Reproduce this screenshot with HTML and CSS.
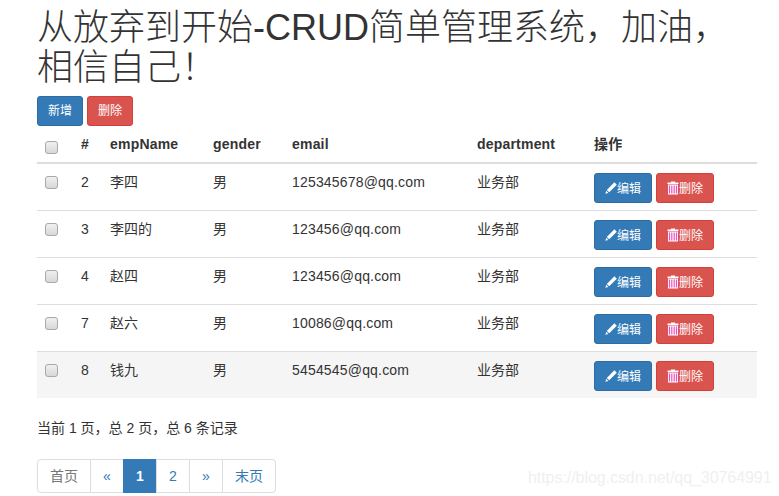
FILE: index.html
```html
<!DOCTYPE html>
<html lang="zh-CN">
<head>
<meta charset="utf-8">
<title>CRUD</title>
<link rel="stylesheet" href="styles.css">
</head>
<body>
<main class="page">
  <h1 class="title">从放弃到开始-CRUD简单管理系统，加油，相信自己！</h1>
  <div class="toolbar">
    <button class="btn btn-primary btn-top">新增</button>
    <button class="btn btn-danger btn-top">删除</button>
  </div>
  <table class="grid">
    <colgroup>
      <col class="c1"><col class="c2"><col class="c3"><col class="c4"><col class="c5"><col class="c6"><col class="c7">
    </colgroup>
    <thead>
      <tr><th><input type="checkbox" class="check"></th><th>#</th><th>empName</th><th>gender</th><th>email</th><th>department</th><th>操作</th></tr>
    </thead>
    <tbody>
      <tr>
        <td><input type="checkbox" class="check"></td><td>2</td><td>李四</td><td>男</td><td class="mail">125345678@qq.com</td><td>业务部</td>
        <td class="actions">
          <button class="btn btn-primary btn-row"><svg class="ico" viewBox="0 0 12 13"><path d="M9.4 .8 11.8 3.2 4.2 10.8 1.8 8.4Z" fill="#fff"/><path d="M1.2 9.2 3.4 11.4 .4 12.2Z" fill="#fff"/></svg>编辑</button>
          <button class="btn btn-danger btn-row"><svg class="ico" viewBox="0 0 12 14"><path d="M4 1.5V.5H8V1.5H11.5V3H.5V1.5Z" fill="#fff"/><path d="M1 3.5H11V13.5H1Z" fill="#fff"/><path d="M2.5 4.5V12.5M4.8 4.5V12.5M7.2 4.5V12.5M9.5 4.5V12.5" stroke="#f04fc0" stroke-width="1.2"/></svg>删除</button>
        </td>
      </tr>
      <tr>
        <td><input type="checkbox" class="check"></td><td>3</td><td>李四的</td><td>男</td><td class="mail">123456@qq.com</td><td>业务部</td>
        <td class="actions">
          <button class="btn btn-primary btn-row"><svg class="ico" viewBox="0 0 12 13"><path d="M9.4 .8 11.8 3.2 4.2 10.8 1.8 8.4Z" fill="#fff"/><path d="M1.2 9.2 3.4 11.4 .4 12.2Z" fill="#fff"/></svg>编辑</button>
          <button class="btn btn-danger btn-row"><svg class="ico" viewBox="0 0 12 14"><path d="M4 1.5V.5H8V1.5H11.5V3H.5V1.5Z" fill="#fff"/><path d="M1 3.5H11V13.5H1Z" fill="#fff"/><path d="M2.5 4.5V12.5M4.8 4.5V12.5M7.2 4.5V12.5M9.5 4.5V12.5" stroke="#f04fc0" stroke-width="1.2"/></svg>删除</button>
        </td>
      </tr>
      <tr>
        <td><input type="checkbox" class="check"></td><td>4</td><td>赵四</td><td>男</td><td class="mail">123456@qq.com</td><td>业务部</td>
        <td class="actions">
          <button class="btn btn-primary btn-row"><svg class="ico" viewBox="0 0 12 13"><path d="M9.4 .8 11.8 3.2 4.2 10.8 1.8 8.4Z" fill="#fff"/><path d="M1.2 9.2 3.4 11.4 .4 12.2Z" fill="#fff"/></svg>编辑</button>
          <button class="btn btn-danger btn-row"><svg class="ico" viewBox="0 0 12 14"><path d="M4 1.5V.5H8V1.5H11.5V3H.5V1.5Z" fill="#fff"/><path d="M1 3.5H11V13.5H1Z" fill="#fff"/><path d="M2.5 4.5V12.5M4.8 4.5V12.5M7.2 4.5V12.5M9.5 4.5V12.5" stroke="#f04fc0" stroke-width="1.2"/></svg>删除</button>
        </td>
      </tr>
      <tr>
        <td><input type="checkbox" class="check"></td><td>7</td><td>赵六</td><td>男</td><td class="mail">10086@qq.com</td><td>业务部</td>
        <td class="actions">
          <button class="btn btn-primary btn-row"><svg class="ico" viewBox="0 0 12 13"><path d="M9.4 .8 11.8 3.2 4.2 10.8 1.8 8.4Z" fill="#fff"/><path d="M1.2 9.2 3.4 11.4 .4 12.2Z" fill="#fff"/></svg>编辑</button>
          <button class="btn btn-danger btn-row"><svg class="ico" viewBox="0 0 12 14"><path d="M4 1.5V.5H8V1.5H11.5V3H.5V1.5Z" fill="#fff"/><path d="M1 3.5H11V13.5H1Z" fill="#fff"/><path d="M2.5 4.5V12.5M4.8 4.5V12.5M7.2 4.5V12.5M9.5 4.5V12.5" stroke="#f04fc0" stroke-width="1.2"/></svg>删除</button>
        </td>
      </tr>
      <tr class="hover">
        <td><input type="checkbox" class="check"></td><td>8</td><td>钱九</td><td>男</td><td class="mail">5454545@qq.com</td><td>业务部</td>
        <td class="actions">
          <button class="btn btn-primary btn-row"><svg class="ico" viewBox="0 0 12 13"><path d="M9.4 .8 11.8 3.2 4.2 10.8 1.8 8.4Z" fill="#fff"/><path d="M1.2 9.2 3.4 11.4 .4 12.2Z" fill="#fff"/></svg>编辑</button>
          <button class="btn btn-danger btn-row"><svg class="ico" viewBox="0 0 12 14"><path d="M4 1.5V.5H8V1.5H11.5V3H.5V1.5Z" fill="#fff"/><path d="M1 3.5H11V13.5H1Z" fill="#fff"/><path d="M2.5 4.5V12.5M4.8 4.5V12.5M7.2 4.5V12.5M9.5 4.5V12.5" stroke="#f04fc0" stroke-width="1.2"/></svg>删除</button>
        </td>
      </tr>
    </tbody>
  </table>
  <p class="summary">当前 1 页，总 2 页，总 6 条记录</p>
  <nav class="pager">
    <a class="page-link muted">首页</a><a class="page-link">«</a><a class="page-link active">1</a><a class="page-link">2</a><a class="page-link">»</a><a class="page-link">末页</a>
  </nav>
</main>
<div class="watermark">https://blog.csdn.net/qq_30764991</div>
</body>
</html>
```
FILE: styles.css
```css
* { box-sizing: border-box; }
html, body { height: 100%; }
body {
  margin: 0;
  overflow: hidden;
  background: #fff;
  color: #333;
  font-family: "Liberation Sans", "Noto Sans CJK SC", sans-serif;
  font-size: 14px;
  line-height: 20px;
}
.page { width: 720px; margin-left: 37px; }
.title {
  margin: 0;
  padding-top: 8px;
  font-size: 36px;
  font-weight: 300;
  line-height: 39.6px;
  height: 96px;
}
.toolbar { display: flex; gap: 4px; height: 30px; }
.btn {
  display: inline-flex;
  align-items: center;
  justify-content: center;
  height: 30px;
  padding: 0;
  border: 1px solid transparent;
  border-radius: 3px;
  color: #fff;
  font-family: inherit;
  font-size: 12px;
  line-height: 18px;
}
.btn-primary { background: #337ab7; border-color: #2e6da4; }
.btn-danger { background: #d9534f; border-color: #d43f3a; }
.btn-top { width: 46px; }
.btn-row { width: 58px; padding-top: 2px; }
.ico { width: 12px; height: 14px; margin-top: -3px; flex: none; }
.grid { width: 720px; table-layout: fixed; border-collapse: collapse; border-spacing: 0; }
.c1 { width: 36px; } .c2 { width: 29px; } .c3 { width: 103px; } .c4 { width: 79px; }
.c5 { width: 185px; } .c6 { width: 117px; } .c7 { width: 171px; }
th {
  height: 37px;
  padding: 8px;
  text-align: left;
  vertical-align: bottom;
  font-weight: 700;
  letter-spacing: .2px;
  border-bottom: 2px solid #ddd;
}
td {
  height: 47px;
  padding: 8px;
  vertical-align: top;
  border-top: 1px solid #ddd;
}
thead + tbody tr:first-child td { border-top: 0; height: 47px; }
.hover td { background: #f5f5f5; height: 46px; padding-bottom: 6px; }
.hover .actions { padding-bottom: 6px; }
.mail { letter-spacing: .18px; }
.actions { padding-top: 9px; padding-bottom: 7px; }
.check {
  appearance: none;
  -webkit-appearance: none;
  display: block;
  width: 13px;
  height: 13px;
  margin: 3px 0 0;
  border: 1px solid #a9a9a9;
  border-radius: 3px;
  background: linear-gradient(#f0f0f0, #d8d8d8);
}
td .check { margin-top: 4px; }
.summary { margin: 20px 0 0; height: 20px; }
.pager { display: flex; width: max-content; margin-top: 21px; }
.page-link {
  display: block;
  min-width: 34px;
  height: 34px;
  padding: 6px 12px;
  margin-left: -1px;
  background: #fff;
  border: 1px solid #ddd;
  color: #337ab7;
  text-align: center;
}
.page-link:first-child { margin-left: 0; border-radius: 4px 0 0 4px; }
.page-link:last-child { border-radius: 0 4px 4px 0; }
.muted { color: #777; }
.active { background: #337ab7; border-color: #337ab7; color: #fff; font-weight: 700; }
.watermark {
  position: absolute;
  left: 528px;
  top: 468px;
  color: #f0f0f0;
  font-size: 16px;
  letter-spacing: -.06px;
  line-height: 20px;
  white-space: nowrap;
}
```
